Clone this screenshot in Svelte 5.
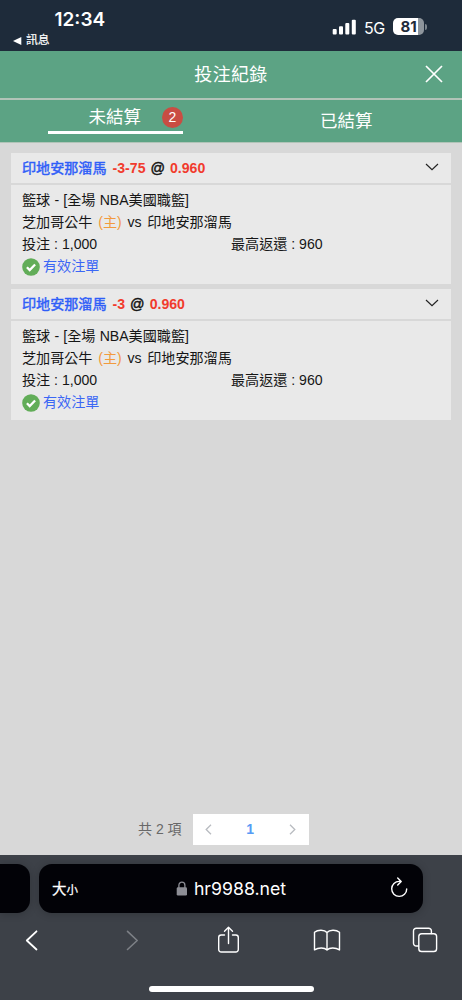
<script>
  const bets = [
    { team: '印地安那溜馬', line: '-3-75', odds: '0.960' },
    { team: '印地安那溜馬', line: '-3', odds: '0.960' }
  ];
</script>

<div class="phone">
  <header class="status">
    <div class="left">
      <div class="clock">12:34</div>
      <div class="back">
        <svg width="9" height="8" viewBox="0 0 9 8"><path d="M0 4L8.3 0v8z" fill="#fff" /></svg>
        <span>訊息</span>
      </div>
    </div>
    <div class="right">
      <svg class="signal" width="25" height="17" viewBox="0 0 25 17" fill="#fff">
        <rect x="0.7" y="10" width="4" height="5.5" rx="1" />
        <rect x="7" y="7.3" width="4" height="8.2" rx="1" />
        <rect x="13.3" y="4" width="4" height="11.5" rx="1" />
        <rect x="19.8" y="0.7" width="4" height="14.8" rx="1" />
      </svg>
      <span class="net">5G</span>
      <div class="battery"><span>81</span></div>
      <i class="tip"></i>
    </div>
  </header>

  <div class="title">
    <h1>投注紀錄</h1>
    <svg class="close" width="18" height="18" viewBox="0 0 18 18"><path d="M1 1l16 16M17 1L1 17" stroke="#fff" stroke-width="1.7" fill="none" /></svg>
  </div>

  <nav class="tabs">
    <div class="tab">
      <div class="active"><span>未結算</span><b>2</b></div>
    </div>
    <div class="tab second"><span>已結算</span></div>
  </nav>

  <main>
    {#each bets as bet}
      <article>
        <div class="head">
          <span class="team">{bet.team}</span>
          <span class="red line">{bet.line}</span>
          <span class="at">@</span>
          <span class="red">{bet.odds}</span>
          <svg width="14" height="8" viewBox="0 0 14 8"><path d="M1 1l6 5.6L13 1" fill="none" stroke="#222" stroke-width="1.2" /></svg>
        </div>
        <div class="body">
          <p class="league">籃球 - [全場 NBA美國職籃]</p>
          <p class="match">芝加哥公牛 <em>(主)</em> vs 印地安那溜馬</p>
          <p class="amounts"><span>投注 : 1,000</span><span>最高返還 : 960</span></p>
          <p class="valid">
            <svg width="18" height="18" viewBox="0 0 18 18"><circle cx="9" cy="9" r="8.8" fill="#62ad58" /><path d="M4.9 9.2l2.8 2.8 5.4-5.5" fill="none" stroke="#fff" stroke-width="2.3" /></svg>
            <span>有效注單</span>
          </p>
        </div>
      </article>
    {/each}
    <div class="pager">
      <span>共 2 項</span>
      <div class="pages">
        <svg width="7" height="11" viewBox="0 0 7 11"><path d="M6 .8L1.2 5.5 6 10.2" /></svg>
        <b>1</b>
        <svg width="7" height="11" viewBox="0 0 7 11"><path d="M1 .8l4.8 4.7L1 10.2" /></svg>
      </div>
    </div>
  </main>

  <footer>
    <div class="bars">
      <div class="previous"></div>
      <div class="address">
        <span class="size">大<small>小</small></span>
        <div class="host">
          <svg width="12" height="15" viewBox="0 0 12 15"><rect x=".7" y="6.3" width="10.3" height="8.2" rx="1.3" fill="#8d8e95" /><path d="M2.9 7V4.2a3 3 0 0 1 6 0V7" fill="none" stroke="#8d8e95" stroke-width="1.3" /></svg>
          <span>hr9988.net</span>
        </div>
        <svg class="reload" width="18" height="21" viewBox="0 0 18 21" fill="none" stroke="#fff" stroke-width="1.4" stroke-linecap="round" stroke-linejoin="round"><path d="M10.6 4.4H9.3A7.5 7.5 0 1 0 16.7 11.9M7.7 1l3.5 3.4-3.5 3.5" /></svg>
      </div>
      <div class="next"></div>
    </div>
    <div class="tools">
      <div><svg width="13" height="21" viewBox="0 0 13 21"><path d="M11.5 1.3L1.8 10.5l9.7 9" stroke-width="1.8" /></svg></div>
      <div class="dim"><svg width="13" height="21" viewBox="0 0 13 21"><path d="M1.5 1.3l9.7 9.2-9.7 9" stroke-width="1.6" /></svg></div>
      <div class="share"><svg width="23" height="28" viewBox="0 0 23 28"><path d="M7.5 9H4.2A2.5 2.5 0 0 0 1.7 11.5v12A2.5 2.5 0 0 0 4.2 26h14.6a2.5 2.5 0 0 0 2.5-2.5v-12A2.5 2.5 0 0 0 18.8 9h-3.3M11.5 17.5v-16M7.5 5.3l4-4 4 4" /></svg></div>
      <div><svg width="28" height="23" viewBox="0 0 28 23"><path d="M14 3.5C11.5.6 5 .3 1.5 3.3v17.6c4-2.6 10-2.5 12.5 0 2.5-2.5 8.5-2.6 12.5 0V3.3C23 .3 16.5.6 14 3.5v17.4" /></svg></div>
      <div><svg width="26" height="26" viewBox="0 0 26 26"><path d="M6.5 19H4.2a2.7 2.7 0 0 1-2.7-2.7V4a2.7 2.7 0 0 1 2.7-2.7h12.5A2.7 2.7 0 0 1 19.4 4v2.5" /><rect x="6.8" y="6.7" width="17.8" height="17.8" rx="2.8" /></svg></div>
    </div>
    <div class="home"></div>
  </footer>
</div>

<style>
  :global(body) { margin: 0; }
  * { box-sizing: border-box; }
  svg { display: block; flex: none; }
  .phone { width: 462px; height: 1000px; display: flex; flex-direction: column; overflow: hidden; background: #d8d8d8; font-family: "Liberation Sans", "Noto Sans CJK TC", sans-serif; }
  .status { height: 51px; flex: none; background: #1e2b3a; color: #fff; display: flex; justify-content: space-between; font-family: Inter, "Noto Sans CJK TC", sans-serif; }
  .left { padding: 9px 0 0 13px; }
  .clock { margin-left: 41.5px; font-size: 19px; line-height: 21px; font-weight: 600; }
  .back { display: flex; align-items: center; gap: 4px; height: 20px; font-size: 11.8px; line-height: 18px; -webkit-text-stroke: .2px #fff; }
  .back svg { margin-top: 1px; }
  .right { display: flex; align-items: center; height: 23px; margin: 15px 35px 0 0; }
  .signal { margin-top: 2px; }
  .net { font-size: 16px; margin: 2px 8px 0 7px; width: 21px; letter-spacing: -.4px; }
  .battery { width: 31px; height: 17px; border-radius: 5px; background: linear-gradient(90deg, #fff 25px, #8e959c 25px); color: #1e2b3a; font-size: 15px; font-weight: 700; line-height: 17px; text-align: center; }
  .tip { width: 2px; height: 6px; margin-left: 1px; border-radius: 0 3px 3px 0; background: #7c858d; }
  .title { height: 47px; flex: none; display: grid; grid-template-columns: 1fr auto 1fr; align-items: center; background: #5ca384; color: #fff; }
  h1 { grid-column: 2; margin: 0; font-size: 18px; line-height: 26px; font-weight: 400; letter-spacing: .35px; }
  .close { justify-self: end; margin: -2px 19px 0 0; }
  .tabs { height: 45px; flex: none; display: flex; background: #5ca384; border-top: 2px solid #b1c4b8; border-bottom: 1px solid #b1c4b8; color: #fff; font-size: 17.5px; }
  .tab { width: 231px; padding-left: 48px; }
  .active { width: 135px; height: 34px; border-bottom: 3px solid #fff; display: flex; align-items: center; justify-content: flex-end; gap: 21px; padding-top: 3px; line-height: 28px; }
  .active b { width: 21px; height: 21px; border-radius: 50%; background: #c94d43; font: 14px/21px "Liberation Sans", sans-serif; text-align: center; }
  .second { padding: 7px 0 0 89px; line-height: 28px; }
  main { flex: 1; min-height: 0; padding: 10px 11px; display: flex; flex-direction: column; gap: 5px; }
  article { height: 131px; flex: none; font-size: 14.1px; color: #161616; }
  .head { height: 30px; background: #e9e9e9; display: flex; align-items: center; padding: 0 12px 0 11px; font-weight: 700; white-space: nowrap; }
  .team { color: #2f5ef8; margin: -2px 6px 0 0; font-weight: 400; -webkit-text-stroke: .45px #2f5ef8; }
  .red { color: #f13b2d; }
  .at { margin: 0 5px; font-size: 14.3px; font-weight: 400; -webkit-text-stroke: .5px #161616; }
  .head svg { margin: -3px 0 0 auto; }
  .body { margin-top: 2px; height: 99px; padding: 5px 11px 0; background: #e9e9e9; }
  p { margin: 0; height: 21.8px; line-height: 21.8px; white-space: pre; }
  .league { word-spacing: .3px; }
  .match { word-spacing: 1.8px; }
  em { color: #f29a3e; font-style: normal; }
  .amounts { display: grid; grid-template-columns: 209px auto; }
  .valid { display: flex; align-items: center; gap: 3px; height: 23px; color: #3b67f5; }
  .pager { margin: auto 0 0 127px; display: flex; align-items: center; gap: 11px; color: #686868; font-size: 14px; }
  .pager > span { margin-top: -3px; }
  .pages { width: 116px; height: 31px; background: #fff; display: flex; align-items: center; justify-content: space-between; padding: 0 13px 0 12px; color: #579bf5; }
  .pages b { margin-top: -2px; }
  .pages svg { fill: none; stroke: #b8bbc0; stroke-width: 1.3; }
  footer { height: 145px; flex: none; background: #3d4148; color: #fff; font-family: Inter, "Noto Sans CJK TC", sans-serif; }
  .bars { padding-top: 9px; display: flex; justify-content: space-between; }
  .previous, .address { height: 49px; background: #020207; box-shadow: 0 1px 8px #0003; }
  .previous { width: 30px; border-radius: 0 13px 13px 0; }
  .address { width: 384px; border-radius: 13px; display: grid; grid-template-columns: 1fr auto 1fr; align-items: center; padding: 0 15px 0 13px; }
  .size { font-size: 14.5px; margin-top: -2px; -webkit-text-stroke: .25px #fff; }
  small { font-size: 11.5px; }
  .host { display: flex; align-items: center; gap: 6px; font-size: 17.7px; margin-left: 2px; }
  .reload { justify-self: end; margin-top: -3px; }
  .next { width: 30px; }
  .tools { height: 54px; padding: 0 23px 0 17px; display: flex; align-items: center; justify-content: space-between; }
  .tools div { width: 28px; display: flex; justify-content: center; }
  .tools svg { fill: none; stroke: #fff; stroke-width: 1.4; stroke-linecap: round; stroke-linejoin: round; }
  .tools .dim { padding-left: 5px; }
  .tools .share { padding-left: 1px; }
  .tools .dim svg { stroke: #7d8086; }
  .home { width: 165px; height: 6px; margin: 19px auto 0; border-radius: 3px; background: #fff; }
</style>
